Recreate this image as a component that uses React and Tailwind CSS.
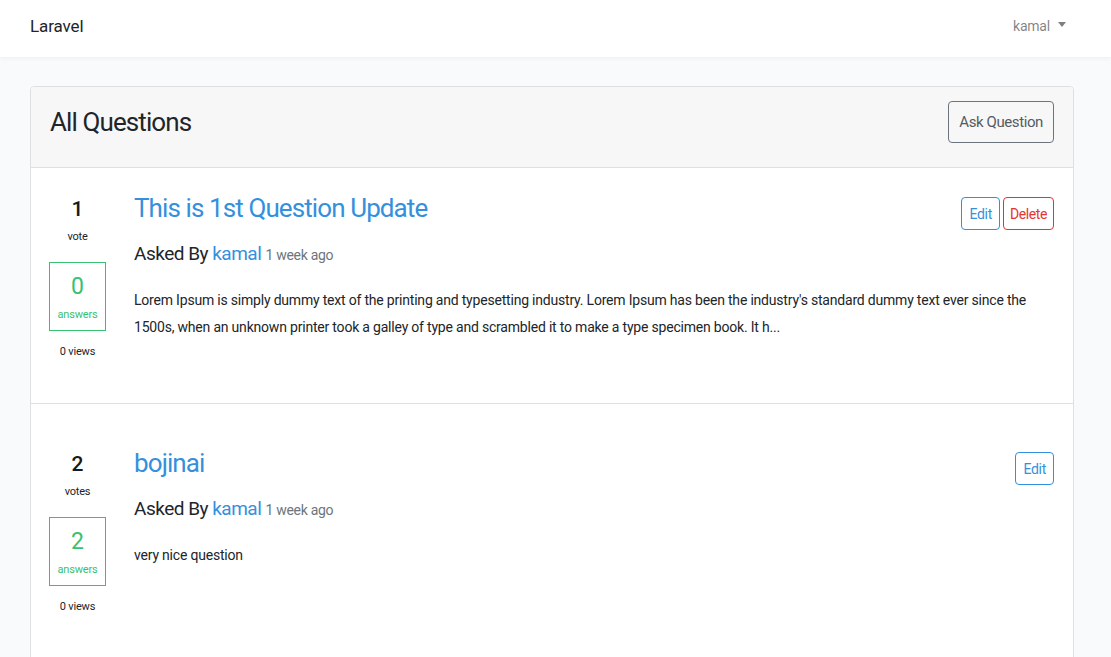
import React from 'react';

const questions = [
  {
    id: 1,
    votes: 1,
    voteLabel: 'vote',
    answers: 0,
    views: 0,
    title: 'This is 1st Question Update',
    body: "Lorem Ipsum is simply dummy text of the printing and typesetting industry. Lorem Ipsum has been the industry's standard dummy text ever since the 1500s, when an unknown printer took a galley of type and scrambled it to make a type specimen book. It h...",
    canDelete: true,
  },
  {
    id: 2,
    votes: 2,
    voteLabel: 'votes',
    answers: 2,
    views: 0,
    title: 'bojinai',
    body: 'very nice question',
    canDelete: false,
  },
];

function Counters({ q }) {
  return (
    <div className="w-[57px] mt-[6px] mr-[28px] flex flex-col items-center text-center shrink-0">
      <div className="text-[21px] leading-[24px] font-medium text-[#16181b]">{q.votes}</div>
      <div className="mt-[9px] text-[11px] leading-[14px] tracking-[-0.2px] text-[#212529]">{q.voteLabel}</div>
      <div className="mt-[18px] w-[57px] h-[69px] border border-[#38c172] text-[#38c172] flex flex-col items-center pt-[11px]">
        <div className="text-[23px] leading-[26px]">{q.answers}</div>
        <div className="mt-[8px] text-[11px] leading-[14px] tracking-[-0.2px]">answers</div>
      </div>
      <div className="mt-[14px] text-[11px] leading-[14px] tracking-[-0.2px] text-[#212529]">{q.views} views</div>
    </div>
  );
}

function QuestionRow({ q, first }) {
  return (
    <div className={`flex pl-[18px] pr-[19px] ${first ? 'pt-[23px] h-[236px] border-b border-[#dfdfdf]' : 'pt-[42px] pb-[80px]'}`}>
      <Counters q={q} />
      <div className="flex-1 min-w-0">
        <div className="flex items-start">
          <a className="text-[26px] leading-[34px] tracking-[-0.9px] text-[#3490dc]">{q.title}</a>
          <div className="ml-auto mt-[6px] flex gap-[3px]">
            <button className="h-[33px] px-[7px] text-[14px] tracking-[-0.3px] leading-none text-[#3490dc] border border-[#3490dc] rounded-[4px]">Edit</button>
            {q.canDelete && (
              <button className="h-[33px] px-[6px] text-[14px] tracking-[-0.4px] leading-none text-[#e3342f] border border-[#e3342f] rounded-[4px]">Delete</button>
            )}
          </div>
        </div>
        <div className="mt-[10px] text-[19px] leading-[28px] tracking-[-0.5px] text-[#212529]">
          Asked By <a className="text-[#3490dc]">kamal</a>{' '}
          <small className="text-[14px] tracking-[-0.3px] text-[#6c757d]">1 week ago</small>
        </div>
        <p className="mt-[18px] text-[14px] leading-[27px] tracking-[-0.2px] text-[#212529] pr-[10px]">{q.body}</p>
      </div>
    </div>
  );
}

export default function App() {
  return (
    <div className="min-h-screen bg-[#f8fafc] font-['Roboto',sans-serif]">
      {/* Navbar */}
      <nav className="h-[57px] bg-white shadow-[0_2px_4px_rgba(0,0,0,0.04)] flex items-center pl-[30px] pr-[45px]">
        <a className="text-[17px] tracking-[-0.1px] text-[#212529] mb-[4px]">Laravel</a>
        <div className="ml-auto flex items-center gap-[8px] text-[rgba(0,0,0,0.5)] mb-[5px]">
          <span className="text-[14px] tracking-[-0.2px]">kamal</span>
          <span className="w-0 h-0 border-l-[4px] border-r-[4px] border-t-[5px] border-l-transparent border-r-transparent border-t-[rgba(0,0,0,0.5)] mb-[3px]" />
        </div>
      </nav>

      <main className="pt-[29px] pl-[30px]">
        <div className="w-[1044px] bg-white border border-[#dfdfdf] rounded-[4px] overflow-hidden">
          <div className="h-[81px] bg-[#f7f7f7] border-b border-[#dfdfdf] flex items-start pt-[14px] px-[19px]">
            <h2 className="text-[26px] leading-[42px] tracking-[-0.9px] text-[#212529]">All Questions</h2>
            <button className="ml-auto h-[42px] px-[10px] text-[15px] tracking-[-0.4px] text-[#555b61] border border-[#6c757d] rounded-[4px]">Ask Question</button>
          </div>
          {questions.map((q, i) => (
            <QuestionRow key={q.id} q={q} first={i === 0} />
          ))}
        </div>
      </main>
    </div>
  );
}
